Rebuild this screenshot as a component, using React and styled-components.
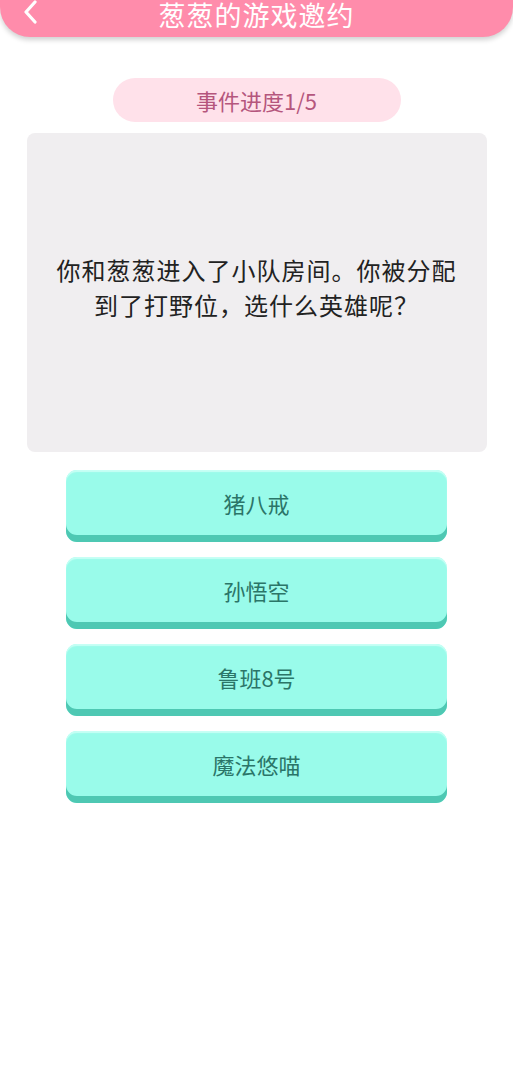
import React from "react";
import styled, { createGlobalStyle } from "styled-components";

const Global = createGlobalStyle`
  html, body { margin: 0; padding: 0; background: #ffffff; }
  body { font-family: "Noto Sans CJK SC", "Noto Sans", sans-serif; }
`;

const Page = styled.div`
  width: 513px;
  min-height: 1073px;
  background: #fff;
  display: flex;
  flex-direction: column;
  align-items: center;
`;

const Header = styled.header`
  position: relative;
  width: 100%;
  height: 37px;
  background: #ff8cab;
  border-radius: 0 0 30px 30px;
  box-shadow: 0 3px 5px rgba(0, 0, 0, 0.18);
  display: flex;
  align-items: flex-start;
  justify-content: center;
  box-sizing: border-box;
  padding-top: 1px;
`;

const Title = styled.h1`
  margin: 0;
  color: #fff;
  font-size: 27px;
  font-weight: 400;
  line-height: 28px;
  letter-spacing: 1px;
`;

const Back = styled.button`
  position: absolute;
  left: 18px;
  top: -1px;
  width: 24px;
  height: 26px;
  border: 0;
  padding: 0;
  background: none;
  display: flex;
  align-items: center;
  justify-content: center;
`;

const Pill = styled.div`
  margin-top: 41px;
  width: 288px;
  height: 44px;
  border-radius: 22px;
  background: #ffe1ea;
  color: #b5567d;
  font-size: 22px;
  display: flex;
  align-items: center;
  justify-content: center;
`;

const Card = styled.div`
  margin-top: 11px;
  width: 460px;
  height: 319px;
  box-sizing: border-box;
  border-radius: 8px;
  background: #f0eef0;
  display: flex;
  align-items: center;
  justify-content: center;
  padding: 0 20px;
`;

const Question = styled.p`
  margin: -12px 0 0;
  text-align: center;
  color: #222;
  font-size: 24px;
  line-height: 35px;
  letter-spacing: 1px;
`;

const Options = styled.div`
  margin-top: 18px;
  display: flex;
  flex-direction: column;
  gap: 15px;
`;

const Option = styled.button`
  width: 381px;
  height: 72px;
  border: 0;
  padding: 0 0 7px;
  box-sizing: border-box;
  border-radius: 11px;
  background: #99fbea;
  box-shadow: inset 0 -7px 0 #4ec8b3, inset 0 2px 1px #c7fff5;
  color: #2b7568;
  font-family: "Noto Sans CJK SC", "Noto Sans", sans-serif;
  font-size: 22px;
  display: flex;
  align-items: center;
  justify-content: center;
`;

const options = ["猪八戒", "孙悟空", "鲁班8号", "魔法悠喵"];

export default function App() {
  return (
    <>
      <Global />
      <Page>
        <Header>
          <Back aria-label="back">
            <svg width="16" height="24" viewBox="0 0 16 24" fill="none">
              <path d="M13 2 L4 12 L13 22" stroke="#fff" strokeWidth="3.2" strokeLinecap="round" strokeLinejoin="round" />
            </svg>
          </Back>
          <Title>葱葱的游戏邀约</Title>
        </Header>
        <Pill>事件进度1/5</Pill>
        <Card>
          <Question>
            你和葱葱进入了小队房间。你被分配
            <br />
            到了打野位，选什么英雄呢？
          </Question>
        </Card>
        <Options>
          {options.map((o) => (
            <Option key={o}>{o}</Option>
          ))}
        </Options>
      </Page>
    </>
  );
}
